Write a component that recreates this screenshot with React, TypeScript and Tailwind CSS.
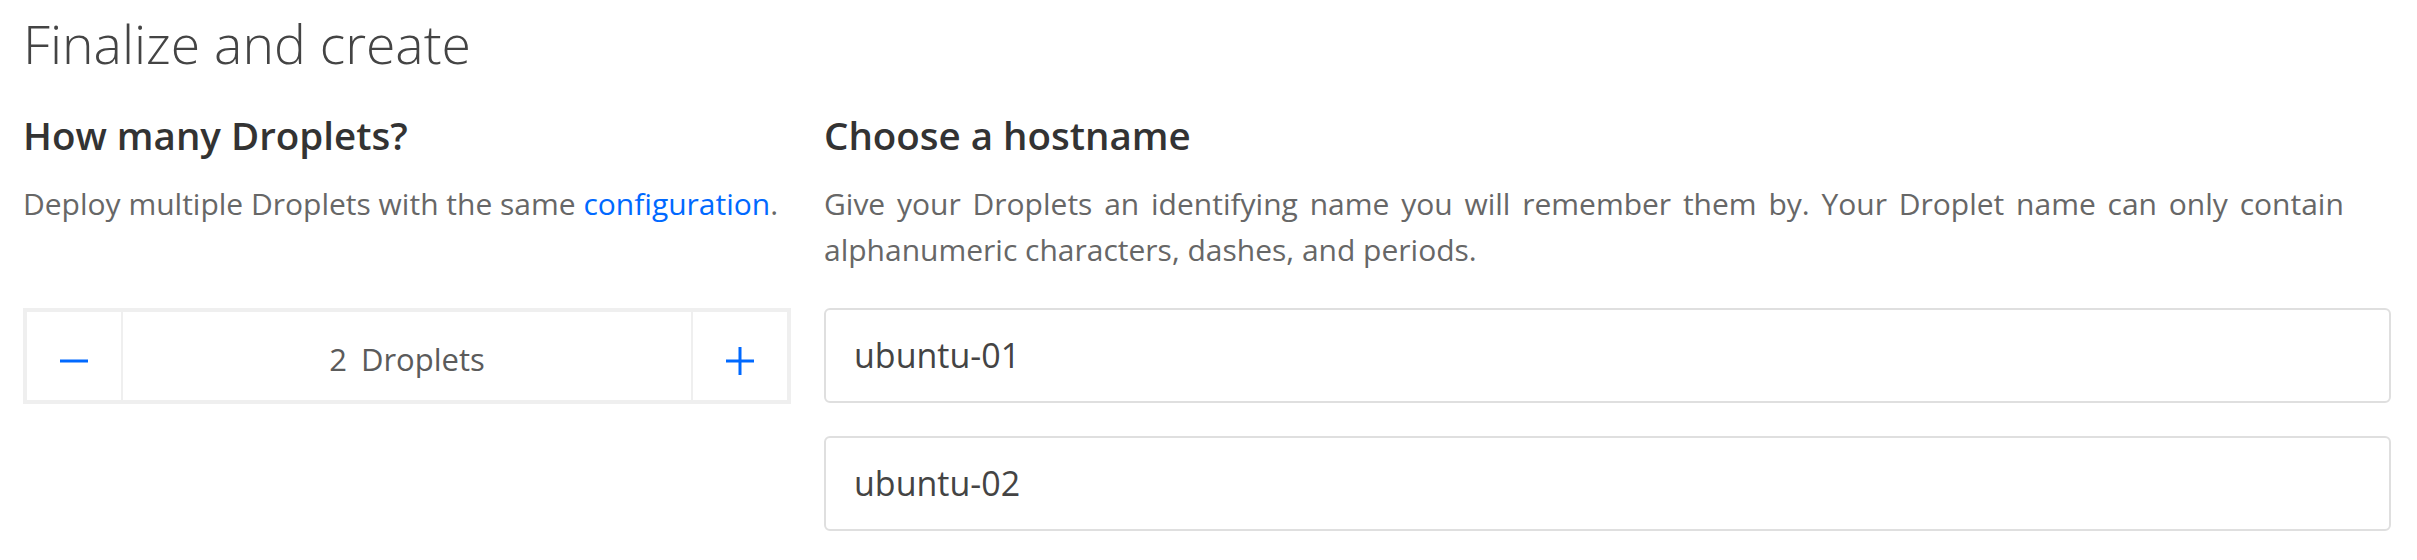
import React from 'react';

const Stepper: React.FC = () => {
  return (
    <div className="flex h-[96px] w-[768px] border-4 border-[#efefef] bg-white">
      <button className="flex w-[96px] items-center justify-center border-r-2 border-[#efefef] pt-[9px]">
        <svg width="28" height="28" viewBox="0 0 28 28">
          <rect x="0" y="12.5" width="28" height="3" fill="#0069ff" />
        </svg>
      </button>
      <div className="flex flex-1 items-center justify-center pt-[6px] text-[31px] text-[#5b5b5b]">
        <span>2</span>
        <span className="ml-[14px]">Droplets</span>
      </div>
      <button className="flex w-[96px] items-center justify-center border-l-2 border-[#efefef] pt-[9px]">
        <svg width="28" height="28" viewBox="0 0 28 28">
          <rect x="0" y="12.5" width="28" height="3" fill="#0069ff" />
          <rect x="12.5" y="0" width="3" height="28" fill="#0069ff" />
        </svg>
      </button>
    </div>
  );
};

const HostInput: React.FC<{ value: string }> = ({ value }) => {
  return (
    <div className="flex h-[95px] items-center rounded-[6px] border-2 border-[#dfdfdf] bg-white px-[28px] text-[34px] text-[#444]">
      {value}
    </div>
  );
};

export default function App() {
  return (
    <div className="h-[560px] w-[2417px] bg-white pl-[23px] pr-[26px] font-['Open_Sans',sans-serif]">
      <h1 className="pt-[14px] text-[53.5px] font-light leading-[60px] text-[#444]">Finalize and create</h1>

      <div className="mt-[39px] flex gap-[33px]">
        {/* Droplet count */}
        <div className="w-[768px]">
          <h2 className="text-[38.5px] font-semibold leading-[44px] text-[#333]">How many Droplets?</h2>
          <div className="mt-[24px] h-[92px]">
            <p className="text-[30px] leading-[46px] text-[#676767]">
              Deploy multiple Droplets with the same <a href="#" className="text-[#0069ff]">configuration</a>.
            </p>
          </div>
          <div className="mt-[35px]">
            <Stepper />
          </div>
        </div>

        {/* Hostnames */}
        <div className="flex-1">
          <h2 className="text-[38.5px] font-semibold leading-[44px] text-[#333]">Choose a hostname</h2>
          <div className="mt-[24px] h-[92px]">
            <p className="text-[30px] leading-[46px] text-[#676767]">
              <span className="[word-spacing:4px]">
                Give your Droplets an identifying name you will remember them by. Your Droplet name can only contain
              </span>
              <br />
              alphanumeric characters, dashes, and periods.
            </p>
          </div>
          <div className="mt-[35px] flex flex-col gap-[33px]">
            <HostInput value="ubuntu-01" />
            <HostInput value="ubuntu-02" />
          </div>
        </div>
      </div>
    </div>
  );
}
